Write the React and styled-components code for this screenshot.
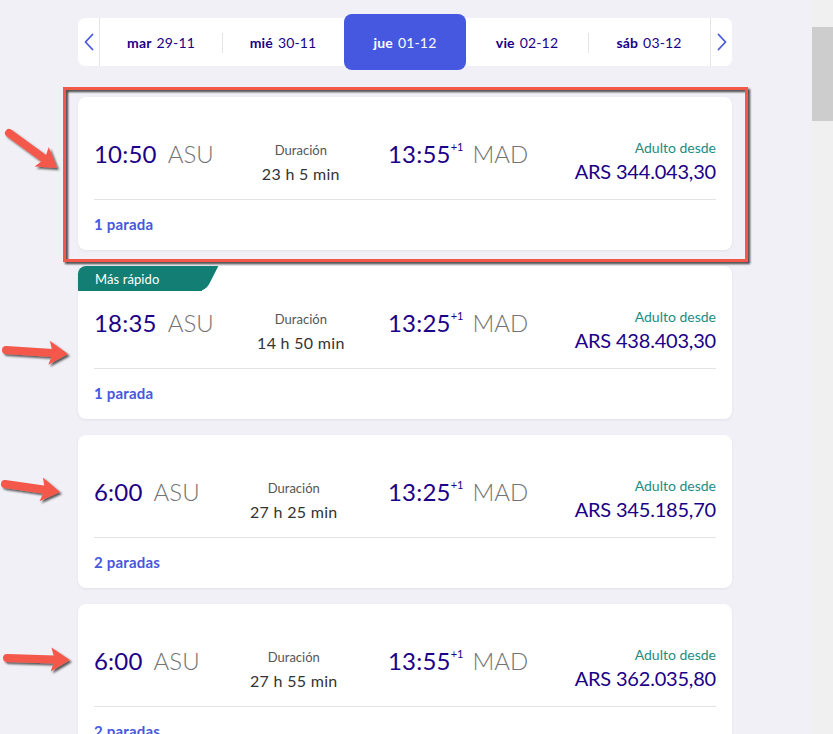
import React from "react";
import styled, { createGlobalStyle, css } from "styled-components";

const GlobalStyle = createGlobalStyle`
  html, body { margin: 0; padding: 0; }
  body { font-family: Lato, "Noto Sans", sans-serif; background: #f1f0f6; }
  * { box-sizing: border-box; }
`;

const INDIGO = "#1b0088";
const BLUE = "#4658df";
const RED = "#f4584b";

const Page = styled.div`
  position: relative;
  display: flex;
  height: 734px;
  overflow: hidden;
  background: #f1f0f6;
`;

const Main = styled.div`
  flex: 1;
  padding: 18px 0 0 78px;
`;

const Column = styled.div`
  width: 654px;
  display: flex;
  flex-direction: column;
  gap: 16px;
`;

const ScrollTrack = styled.div`
  width: 21px;
  background: #f0f0f0;
  padding-top: 27px;
`;

const Thumb = styled.div`
  height: 94px;
  background: #cdcdcd;
`;

const DateBar = styled.div`
  display: flex;
  height: 48px;
  background: #fff;
  border-radius: 7px;
  margin-bottom: 15px;
`;

const ArrowCell = styled.div`
  width: 22px;
  display: flex;
  align-items: center;
  justify-content: center;
  ${(p) =>
    p.$side === "left"
      ? css`border-right: 1px solid #e4e4e8;`
      : css`border-left: 1px solid #e4e4e8;`}
`;

const Tab = styled.div`
  flex: 1;
  position: relative;
  display: flex;
  align-items: center;
  justify-content: center;
  font-size: 14px;
  letter-spacing: 0.15px;
  color: ${INDIGO};
  b { font-weight: 700; margin-right: 5px; }
  ${(p) =>
    p.$active &&
    css`
      margin: -4px 0;
      background: ${BLUE};
      color: #fff;
      border-radius: 8px;
    `}
  ${(p) =>
    p.$sep &&
    css`
      &::before {
        content: "";
        position: absolute;
        left: 0;
        top: 15px;
        bottom: 13px;
        border-left: 1px solid #e4e4e8;
      }
    `}
`;

const Card = styled.div`
  position: relative;
  background: #fff;
  border-radius: 8px;
  padding: 0 16px;
  box-shadow: 0 1px 3px rgba(40, 30, 90, 0.07);
`;

const Highlight = styled.div`
  position: absolute;
  left: -15px;
  top: -10px;
  right: -16px;
  bottom: -12px;
  border: 3px solid ${RED};
  filter: drop-shadow(2px 2px 1px rgba(0, 0, 0, 0.75));
  pointer-events: none;
`;

const Badge = styled.div`
  position: absolute;
  left: 0;
  top: 0;
  width: 124px;
  height: 25px;
  padding-left: 17px;
  display: flex;
  align-items: center;
  background: #137f74;
  color: #fff;
  font-size: 13px;
  letter-spacing: 0.1px;
  border-top-left-radius: 8px;
  &::after {
    content: "";
    position: absolute;
    right: -10px;
    top: 0;
    width: 24px;
    height: 100%;
    background: #137f74;
    transform: skewX(-27deg);
    border-bottom-right-radius: 7px;
  }
  span { position: relative; z-index: 1; }
`;

const TopRow = styled.div`
  display: grid;
  grid-template-columns: 294px 1fr;
  height: 103px;
  padding-top: 42px;
  border-bottom: 1px solid #e3e3e6;
`;

const LeftGroup = styled.div`
  display: flex;
  align-items: flex-start;
`;

const RightGroup = styled.div`
  display: flex;
  align-items: flex-start;
  justify-content: space-between;
`;

const Stop = styled.div`
  display: flex;
  align-items: flex-start;
  line-height: 34px;
  margin-top: -2px;
`;

const Time = styled.span`
  font-size: 24px;
  color: ${INDIGO};
  letter-spacing: 0.2px;
`;

const Plus = styled.sup`
  font-size: 11px;
  line-height: 1;
  color: ${INDIGO};
  margin-top: 4px;
  vertical-align: top;
`;

const Code = styled.span`
  font-size: 24px;
  font-weight: 300;
  color: #747474;
  margin-left: ${(p) => (p.$wide ? "11px" : "9px")};
`;

const Duration = styled.div`
  flex: 1;
  text-align: center;
`;

const Label = styled.div`
  font-size: 13px;
  line-height: 22px;
  color: #555;
`;

const Value = styled.div`
  font-size: 16px;
  line-height: 26px;
  letter-spacing: 0.3px;
  color: #333;
`;

const Price = styled.div`
  text-align: right;
`;

const PriceLabel = styled.div`
  font-size: 14px;
  line-height: 18px;
  color: #1d8c82;
`;

const Amount = styled.div`
  font-size: 20px;
  line-height: 28px;
  color: ${INDIGO};
  letter-spacing: -0.2px;
`;

const Stops = styled.div`
  height: 50px;
  display: flex;
  align-items: center;
  padding-bottom: 2px;
  font-size: 15px;
  font-weight: 700;
  letter-spacing: 0.2px;
  color: ${BLUE};
`;

const Overlay = styled.svg`
  position: absolute;
  left: 0;
  top: 0;
  pointer-events: none;
`;

const Chevron = ({ dir }) => (
  <svg width="10" height="18" viewBox="0 0 10 18">
    <polyline
      points={dir === "left" ? "8.5,1.5 1.5,9 8.5,16.5" : "1.5,1.5 8.5,9 1.5,16.5"}
      fill="none"
      stroke={BLUE}
      strokeWidth="1.8"
      strokeLinecap="round"
      strokeLinejoin="round"
    />
  </svg>
);

const Arrow = ({ x1, y1, x2, y2 }) => {
  const dx = x2 - x1;
  const dy = y2 - y1;
  const len = Math.hypot(dx, dy);
  const ux = dx / len;
  const uy = dy / len;
  const nx = -uy;
  const ny = ux;
  const hl = 19;
  const hw = 12;
  const bx = x2 - ux * hl;
  const by = y2 - uy * hl;
  const cx = x2 - ux * hl * 0.8;
  const cy = y2 - uy * hl * 0.8;
  const head = `${x2},${y2} ${bx + nx * hw},${by + ny * hw} ${cx},${cy} ${bx - nx * hw},${by - ny * hw}`;
  return (
    <g filter="url(#shadow)">
      <line x1={x1} y1={y1} x2={cx} y2={cy} stroke={RED} strokeWidth="8" strokeLinecap="round" />
      <polygon points={head} fill={RED} />
    </g>
  );
};

const dates = [
  { day: "mar", date: "29-11" },
  { day: "mié", date: "30-11" },
  { day: "jue", date: "01-12", active: true },
  { day: "vie", date: "02-12" },
  { day: "sáb", date: "03-12" },
];

const flights = [
  { dep: "10:50", arr: "13:55", dur: "23 h 5 min", price: "ARS 344.043,30", stops: "1 parada", highlight: true },
  { dep: "18:35", arr: "13:25", dur: "14 h 50 min", price: "ARS 438.403,30", stops: "1 parada", badge: "Más rápido" },
  { dep: "6:00", arr: "13:25", dur: "27 h 25 min", price: "ARS 345.185,70", stops: "2 paradas" },
  { dep: "6:00", arr: "13:55", dur: "27 h 55 min", price: "ARS 362.035,80", stops: "2 paradas" },
];

const FlightCard = ({ f }) => (
  <Card>
    {f.badge && (
      <Badge>
        <span>{f.badge}</span>
      </Badge>
    )}
    {f.highlight && <Highlight />}
    <TopRow>
      <LeftGroup>
        <Stop>
          <Time>{f.dep}</Time>
          <Code $wide>ASU</Code>
        </Stop>
        <Duration>
          <Label>Duración</Label>
          <Value>{f.dur}</Value>
        </Duration>
      </LeftGroup>
      <RightGroup>
        <Stop>
          <Time>{f.arr}</Time>
          <Plus>+1</Plus>
          <Code>MAD</Code>
        </Stop>
        <Price>
          <PriceLabel>Adulto desde</PriceLabel>
          <Amount>{f.price}</Amount>
        </Price>
      </RightGroup>
    </TopRow>
    <Stops>{f.stops}</Stops>
  </Card>
);

export default function App() {
  return (
    <Page>
      <GlobalStyle />
      <Main>
        <Column>
          <DateBar>
            <ArrowCell $side="left">
              <Chevron dir="left" />
            </ArrowCell>
            {dates.map((d, i) => (
              <Tab key={d.date} $active={d.active} $sep={i === 1 || i === 4}>
                <b>{d.day}</b>
                {d.date}
              </Tab>
            ))}
            <ArrowCell $side="right">
              <Chevron dir="right" />
            </ArrowCell>
          </DateBar>
          {flights.map((f, i) => (
            <FlightCard key={i} f={f} />
          ))}
        </Column>
      </Main>
      <ScrollTrack>
        <Thumb />
      </ScrollTrack>
      <Overlay width="833" height="734">
        <defs>
          <filter id="shadow" x="-20%" y="-20%" width="150%" height="160%">
            <feDropShadow dx="2" dy="2" stdDeviation="1.2" floodColor="#000" floodOpacity="0.65" />
          </filter>
        </defs>
        <Arrow x1={9} y1={133} x2={57} y2={168} />
        <Arrow x1={6} y1={350} x2={68} y2={354} />
        <Arrow x1={5} y1={484} x2={60} y2={492} />
        <Arrow x1={7} y1={658} x2={70} y2={660} />
      </Overlay>
    </Page>
  );
}
